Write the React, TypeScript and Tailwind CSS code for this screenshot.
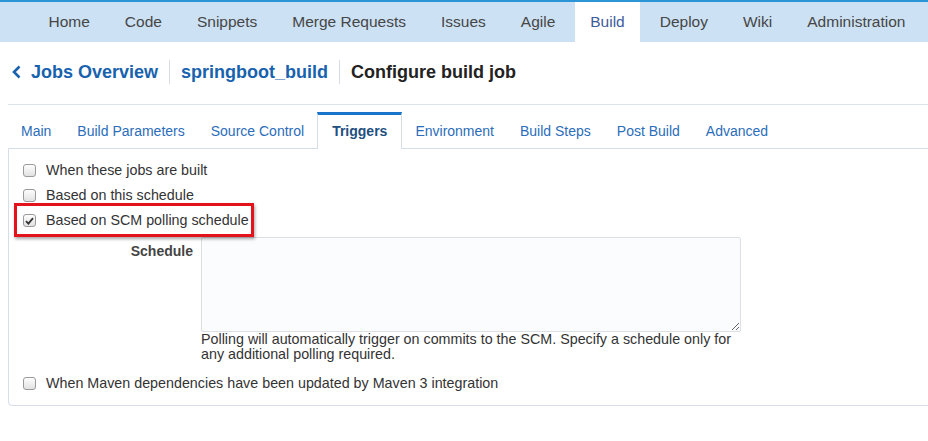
import React from "react";

const navItems = [
  "Home",
  "Code",
  "Snippets",
  "Merge Requests",
  "Issues",
  "Agile",
  "Build",
  "Deploy",
  "Wiki",
  "Administration",
];

const tabs = [
  "Main",
  "Build Parameters",
  "Source Control",
  "Triggers",
  "Environment",
  "Build Steps",
  "Post Build",
  "Advanced",
];

const Checkbox = ({ checked }: { checked?: boolean }) => {
  return (
    <span className="w-[13px] h-[13px] shrink-0 rounded-[3px] border border-[#9a9a9a] bg-gradient-to-b from-[#fdfdfd] to-[#e2e2e2] flex items-center justify-center">
      {checked && (
        <svg width="9" height="8" viewBox="0 0 9 8">
          <path d="M1 4.2 L3.4 6.6 L8 1.2" fill="none" stroke="#333" strokeWidth="1.8" />
        </svg>
      )}
    </span>
  );
};

const Row = ({ label, checked }: { label: string; checked?: boolean }) => {
  return (
    <div className="h-[25px] flex items-center gap-[10px] pl-[14px] text-[14.3px] text-[#333]">
      <Checkbox checked={checked} />
      <span>{label}</span>
    </div>
  );
};

export default function App() {
  return (
    <div className="w-[928px] h-[441px] overflow-hidden bg-white font-['Liberation_Sans',Arial,sans-serif]">
      <div className="h-[42px] border-t-2 border-[#2b95d8] bg-[#cce1f3] flex pl-[31px]">
        {navItems.map((item) => (
          <div
            key={item}
            className={
              item === "Build"
                ? "px-[15px] mx-[2.5px] flex items-center text-[15.5px] bg-white text-[#3d5c9c]"
                : "px-[17.5px] flex items-center text-[15.5px] text-[#464646]"
            }
          >
            {item}
          </div>
        ))}
      </div>

      <div className="mt-[18px] h-[24px] flex items-center pl-3 text-[18px] font-bold">
        <svg width="9" height="14" viewBox="0 0 9 14" className="mr-[10px]">
          <path d="M7.5 1.5 L2 7 L7.5 12.5" fill="none" stroke="#1862ae" strokeWidth="2.6" />
        </svg>
        <span className="text-[#1862ae]">Jobs Overview</span>
        <span className="mx-[11px] w-px h-[24px] bg-[#d6dce3]"></span>
        <span className="text-[#1862ae]">springboot_build</span>
        <span className="mx-[11px] w-px h-[24px] bg-[#d6dce3]"></span>
        <span className="text-[#222]">Configure build job</span>
      </div>

      <div className="ml-2 mt-[20px] h-px bg-[#dbe2ea]"></div>

      <div className="ml-2 w-[940px]">
        <div className="mt-[7px] flex -mb-px relative">
          {tabs.map((tab) =>
            tab === "Triggers" ? (
              <div
                key={tab}
                className="h-[37px] px-[14px] flex items-center border-t-[3px] border-x border-t-[#1a74c9] border-x-[#d5dde6] bg-white text-[14px] font-bold text-[#214f80] pb-px"
              >
                {tab}
              </div>
            ) : (
              <div
                key={tab}
                className="h-[37px] px-[13px] flex items-center text-[14px] text-[#2b6dba] pt-[3px] pb-px"
              >
                {tab}
              </div>
            )
          )}
        </div>

        <div className="border border-[#d5dde6] rounded-bl-[4px] pt-[9px] pb-[9px]">
          <Row label="When these jobs are built" />
          <Row label="Based on this schedule" />
          <div className="relative">
            <Row label="Based on SCM polling schedule" checked />
            <div className="absolute left-[5px] top-[-5px] w-[240px] h-[34px] border-[3px] border-[#e4121b] shadow-[1px_2px_3px_rgba(0,0,0,0.35)]"></div>
          </div>

          <div className="mt-[4px] flex">
            <div className="w-[184px] pt-[6px] text-right text-[14px] font-bold text-[#444] leading-4">
              Schedule
            </div>
            <div className="ml-[8px] w-[540px]">
              <textarea className="block w-[540px] h-[95px] bg-[#fbfcfe] border border-[#dcdfe3] rounded-[2px] outline-none"></textarea>
              <div className="text-[14.3px] leading-[15px] text-[#333]">
                Polling will automatically trigger on commits to the SCM. Specify a schedule only for any
                additional polling required.
              </div>
            </div>
          </div>

          <div className="mt-[9px]">
            <Row label="When Maven dependencies have been updated by Maven 3 integration" />
          </div>
        </div>
      </div>
    </div>
  );
}
